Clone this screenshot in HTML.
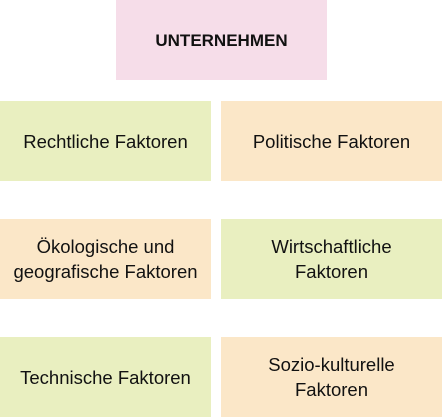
<!DOCTYPE html>
<html><head><meta charset="utf-8"><style>
body{margin:0;width:442px;height:417px;background:#fff;position:relative;overflow:hidden;font-family:"Liberation Sans","DejaVu Sans",sans-serif;color:#111;}
.b{position:absolute;display:flex;align-items:center;justify-content:center;text-align:center;font-size:18.5px;line-height:25px;}
.p{background:#f6dde9}.g{background:#e9efc0}.o{background:#fbe7c8}
</style></head><body>
<div class="b p" style="left:116px;top:0;width:211px;height:80px;font-weight:bold;font-size:17px">UNTERNEHMEN</div>
<div class="b g" style="left:0;top:101px;width:211px;height:80px">Rechtliche Faktoren</div>
<div class="b o" style="left:221px;top:101px;width:221px;height:80px">Politische Faktoren</div>
<div class="b o" style="left:0;top:219px;width:211px;height:80px">Ökologische und<br>geografische Faktoren</div>
<div class="b g" style="left:221px;top:219px;width:221px;height:80px">Wirtschaftliche<br>Faktoren</div>
<div class="b g" style="left:0;top:337px;width:211px;height:80px">Technische Faktoren</div>
<div class="b o" style="left:221px;top:337px;width:221px;height:80px">Sozio-kulturelle<br>Faktoren</div>
</body></html>
